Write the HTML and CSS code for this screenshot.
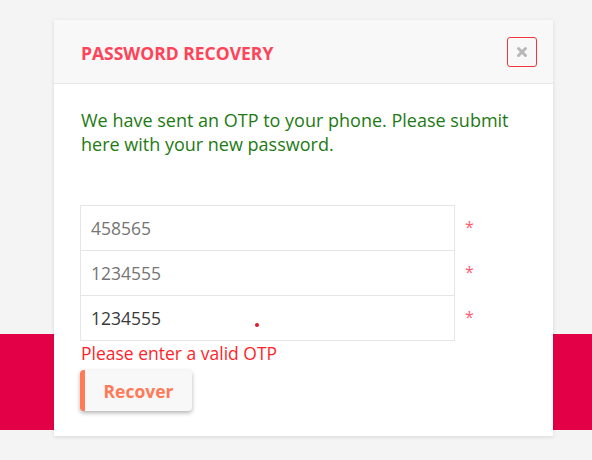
FILE: index.html
```html
<!DOCTYPE html>
<html>
<head>
<meta charset="utf-8">
<link rel="stylesheet" href="styles.css">
</head>
<body>
<div class="page">
  <div class="band"></div>
  <div class="modal">
    <div class="modal-header">
      <h2 class="title">PASSWORD RECOVERY</h2>
      <button class="close" aria-label="Close">
        <svg width="12" height="12" viewBox="0 0 12 12"><path d="M2.5 2.5 L9.5 9.5 M9.5 2.5 L2.5 9.5" stroke="#b8b8b8" stroke-width="3" stroke-linecap="round"/></svg>
      </button>
    </div>
    <div class="modal-body">
      <p class="msg">We have sent an OTP to your phone. Please submit here with your new password.</p>
      <div class="fields">
        <div class="row"><div class="input ph">458565</div><span class="req">*</span></div>
        <div class="row"><div class="input ph">1234555</div><span class="req">*</span></div>
        <div class="row"><div class="input val">1234555<span class="dot"></span></div><span class="req">*</span></div>
      </div>
      <div class="error">Please enter a valid OTP</div>
      <button class="recover">Recover</button>
    </div>
  </div>
</div>
</body>
</html>
```
FILE: styles.css
```css
html, body {
  margin: 0;
  padding: 0;
}
body {
  background: #f4f4f4;
  font-family: "Open Sans", sans-serif;
  width: 592px;
  height: 460px;
  overflow: hidden;
}
.page {
  position: relative;
  width: 592px;
  height: 460px;
}
.band {
  position: absolute;
  left: 0;
  right: 0;
  top: 334px;
  height: 96px;
  background: #e30046;
}
.modal {
  position: absolute;
  left: 54px;
  top: 20px;
  width: 499px;
  height: 416px;
  background: #fff;
  box-shadow: 0 1px 4px rgba(0,0,0,0.12);
}
.modal-header {
  height: 63px;
  background: #f8f8f8;
  border-bottom: 1px solid #e6e6e6;
  display: flex;
  align-items: center;
  justify-content: space-between;
  padding: 0 16px 0 27px;
}
.title {
  margin: 2px 0 0 0;
  font-size: 17.5px;
  font-weight: 700;
  color: #ff4358;
}
.close {
  width: 30px;
  height: 30px;
  border: 1px solid #f2353e;
  border-radius: 3px;
  background: #f8f8f8;
  display: flex;
  align-items: center;
  justify-content: center;
  padding: 0;
  margin-top: 0;
}
.modal-body {
  padding: 24px 26px 0 26px;
}
.msg {
  margin: 0 0 0 1px;
  font-size: 18px;
  line-height: 24px;
  color: #1e7a13;
  width: 450px;
}
.fields {
  margin-top: 49px;
  display: flex;
  flex-direction: column;
}
.row {
  display: flex;
  align-items: flex-start;
  margin-top: -1px;
}
.row:first-child { margin-top: 0; }
.input {
  position: relative;
  box-sizing: border-box;
  width: 375px;
  height: 46px;
  border: 1px solid #e6e6e6;
  padding: 0 10px;
  font-size: 17.5px;
  line-height: 44px;
}
.ph { color: #757575; }
.val { color: #3a3a3a; }
.req {
  color: #ff5a70;
  font-size: 16px;
  margin-left: 10px;
  line-height: 44px;
}
.dot {
  position: absolute;
  left: 174px;
  top: 27px;
  width: 4px;
  height: 4px;
  border-radius: 50%;
  background: #e4182a;
}
.error {
  color: #ff1f2a;
  font-size: 17.5px;
  line-height: 24px;
  margin-top: 0;
  margin-left: 1px;
}
.recover {
  margin-top: 5px;
  width: 112px;
  height: 41px;
  border: 0;
  border-left: 5px solid #ff7a57;
  border-radius: 4px;
  background: #f8f8f8;
  color: #ff7a57;
  font-family: "Open Sans", sans-serif;
  font-size: 17.5px;
  font-weight: 700;
  box-shadow: 0 2px 4px rgba(0,0,0,0.3);
  padding: 0;
}
```
